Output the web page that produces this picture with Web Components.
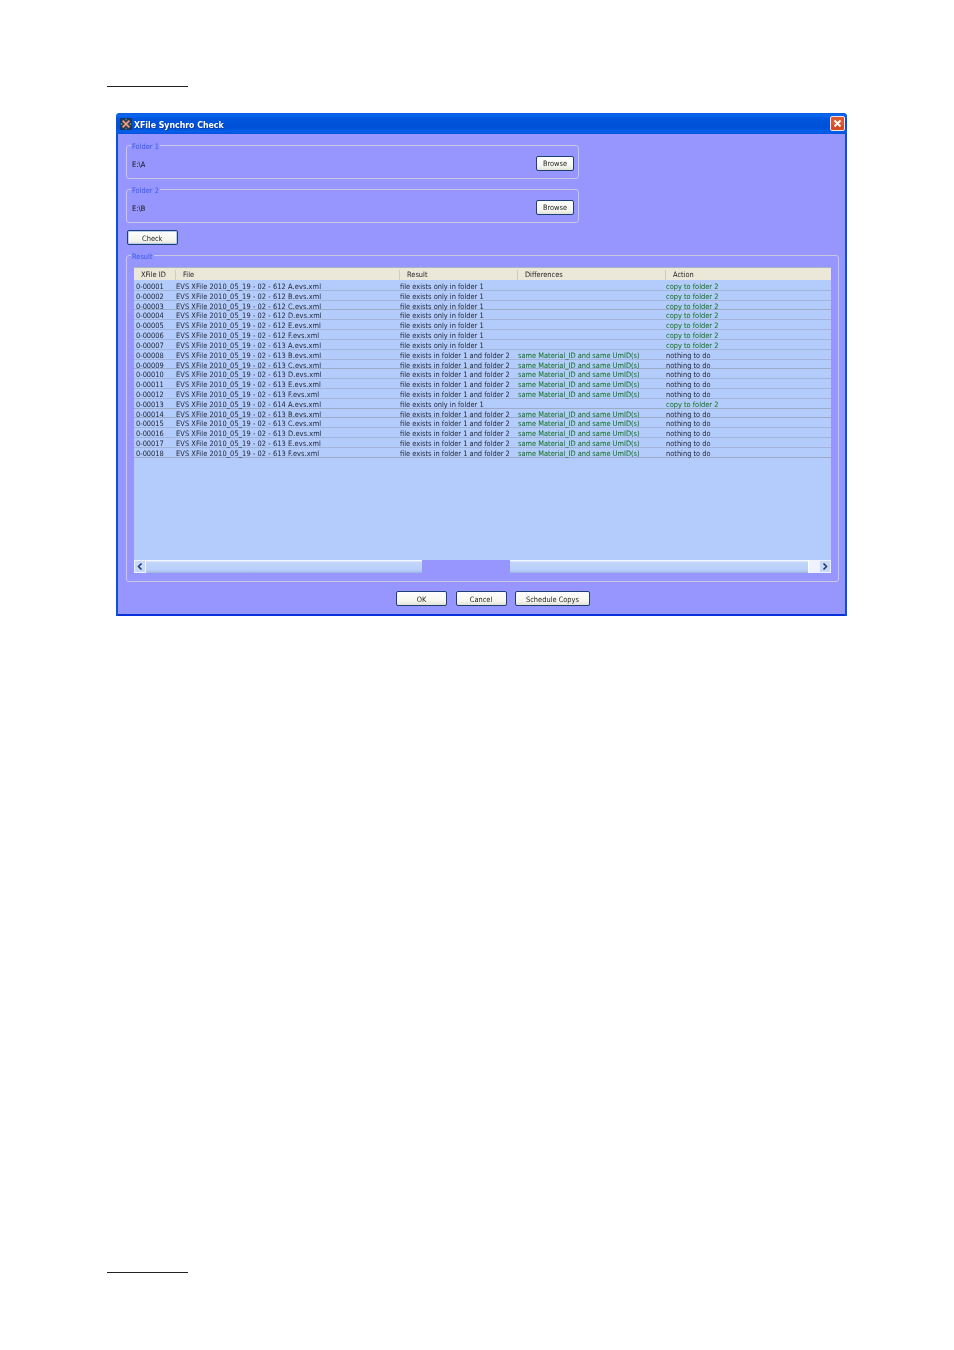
<!DOCTYPE html>
<html>
<head>
<meta charset="utf-8">
<title>XFile Synchro Check</title>
<style>
  html, body { margin: 0; padding: 0; background: #fff; }
</style>
</head>
<body>
<doc-page>
  <xp-window title="XFile Synchro Check">
    <xp-group legend="Folder 1" style="width:453px;height:34px">
      <span style="padding-top:2px">E:\A</span>
      <xp-button style="width:38px">Browse</xp-button>
    </xp-group>
    <xp-group legend="Folder 2" style="width:453px;height:34px;margin-top:10px">
      <span style="padding-top:2px">E:\B</span>
      <xp-button style="width:38px">Browse</xp-button>
    </xp-group>
    <xp-button focused style="width:50.5px;margin:7px 0 10px 1px">Check</xp-button>
    <xp-group legend="Result" mode="block" style="height:327px">
      <xfile-grid></xfile-grid>
      <xp-scrollbar></xp-scrollbar>
    </xp-group>
    <div style="display:flex;gap:8.5px;margin:9px 0 0 270px">
      <xp-button style="width:51px">OK</xp-button>
      <xp-button style="width:51px">Cancel</xp-button>
      <xp-button style="width:75px">Schedule Copys</xp-button>
    </div>
  </xp-window>
</doc-page>

<script>
const FONT = '"DejaVu Sans Condensed", "DejaVu Sans", sans-serif';

class DocPage extends HTMLElement {
  connectedCallback() {
    this.attachShadow({ mode: 'open' });
    this.shadowRoot.innerHTML = `
      <style>
        :host {
          display: flex;
          flex-direction: column;
          width: 954px;
          height: 1350px;
          box-sizing: border-box;
          padding: 86px 0 0 107px;
          background: #fff;
          font-family: ${FONT};
        }
        .rule { width: 81px; height: 1px; background: #222; flex: none; }
        .win { margin: 26px 0 0 9px; flex: none; }
        .bottom { margin-top: 656px; }
      </style>
      <div class="rule"></div>
      <div class="win"><slot></slot></div>
      <div class="rule bottom"></div>
    `;
  }
}
customElements.define('doc-page', DocPage);

class XpWindow extends HTMLElement {
  connectedCallback() {
    this.attachShadow({ mode: 'open' });
    this.shadowRoot.innerHTML = `
      <style>
        :host {
          display: flex;
          flex-direction: column;
          width: 731px;
          height: 503px;
          box-sizing: border-box;
          border-radius: 4px 4px 0 0;
          overflow: hidden;
          background: #0a4fe0;
          font-family: ${FONT};
          filter: blur(0.3px);
        }
        .bar {
          display: flex;
          align-items: center;
          height: 21px;
          flex: none;
          padding: 0 2px 0 4px;
          gap: 2px;
          background: linear-gradient(#0a5ee6 0, #0a66ee 12%, #0054dc 30%, #0050d8 70%, #0560ea 90%, #0350dc 100%);
          color: #fff;
          font: bold 8.7px ${FONT};
        }
        .bar svg { flex: none; display: block; }
        .bar .name { flex: 1; padding-top: 2px; text-shadow: 1px 1px 0 #0a3aa8; }
        .body {
          flex: 1;
          display: flex;
          flex-direction: column;
          margin: 0 2px 2px;
          padding: 11px 6px 0 8px;
          background: #9696fe;
          box-shadow: 0 2px 0 #0831d9;
          min-height: 0;
        }
      </style>
      <div class="bar">
        <svg width="12" height="12" viewBox="0 0 12 12">
          <rect width="12" height="12" rx="1" fill="#1a3560"/>
          <path d="M2.5 2.5l7 7M9.5 2.5l-7 7" stroke="#c8785c" stroke-width="2.4"/>
          <path d="M3 3l6 6M9 3l-6 6" stroke="#f0d4bc" stroke-width=".6"/>
          <circle cx="1.5" cy="6" r="1" fill="#5f9a5a"/>
          <circle cx="10.5" cy="6" r="1" fill="#5f9a5a"/>
          <circle cx="6" cy="1.5" r="1" fill="#3f7a8a"/>
          <circle cx="6" cy="10.5" r="1" fill="#3f7a8a"/>
        </svg>
        <span class="name">${this.getAttribute('title') || ''}</span>
        <svg width="15" height="15" viewBox="0 0 15 15">
          <rect x=".5" y=".5" width="14" height="14" rx="1.5" fill="#dc5a34" stroke="#f4e4dc"/>
          <rect x="1.5" y="9" width="12" height="4.5" fill="#c8401c" opacity=".6"/>
          <path d="M4.5 4.5l6 6M10.5 4.5l-6 6" stroke="#fff" stroke-width="1.8"/>
        </svg>
      </div>
      <div class="body"><slot></slot></div>
    `;
  }
}
customElements.define('xp-window', XpWindow);

class XpGroup extends HTMLElement {
  connectedCallback() {
    this.attachShadow({ mode: 'open' });
    const block = this.getAttribute('mode') === 'block';
    this.shadowRoot.innerHTML = `
      <style>
        :host {
          display: block;
          position: relative;
          box-sizing: border-box;
          flex: none;
          border: 1px solid #c8c8e0;
          border-radius: 3px;
          font: 7.4px ${FONT};
          color: #111;
        }
        .legend {
          position: absolute;
          left: 4px;
          top: -4px;
          padding: 0 1px;
          background: #9696fe;
          color: #3658e8;
          line-height: 9px;
        }
        .in {
          box-sizing: border-box;
          height: 100%;
          ${block
            ? 'padding: 11px 7px 0 7px;'
            : 'display: flex; align-items: center; justify-content: space-between; padding: 2px 4px 0 5px;'}
        }
      </style>
      <span class="legend">${this.getAttribute('legend') || ''}</span>
      <div class="in"><slot></slot></div>
    `;
  }
}
customElements.define('xp-group', XpGroup);

class XpButton extends HTMLElement {
  connectedCallback() {
    this.attachShadow({ mode: 'open' });
    const focus = this.hasAttribute('focused');
    this.shadowRoot.innerHTML = `
      <style>
        :host {
          display: flex;
          align-items: center;
          justify-content: center;
          flex: none;
          box-sizing: border-box;
          height: 15px;
          padding-top: 1px;
          border: 1px solid #1c3f74;
          border-radius: 2px;
          background: linear-gradient(#ffffff, #f6f6f0 70%, #e4e2d6);
          ${focus ? 'box-shadow: inset 0 0 0 1px #b8ccf0;' : ''}
          color: #222;
          font: 7.4px ${FONT};
        }
      </style>
      <slot></slot>
    `;
  }
}
customElements.define('xp-button', XpButton);

class XfileGrid extends HTMLElement {
  connectedCallback() {
    this.attachShadow({ mode: 'open' });
    const ONLY = 'file exists only in folder 1';
    const BOTH = 'file exists in folder 1 and folder 2';
    const SAME = 'same Material_ID and same UmID(s)';
    const COPY = 'copy to folder 2';
    const NONE = 'nothing to do';
    const files = ['612 A', '612 B', '612 C', '612 D', '612 E', '612 F', '613 A',
      '613 B', '613 C', '613 D', '613 E', '613 F', '614 A',
      '613 B', '613 C', '613 D', '613 E', '613 F'];
    const ids = ['00001', '00002', '00003', '00004', '00005', '00006', '00007', '00008', '00009',
      '00010', '00011', '00012', '00013', '00014', '00015', '00016', '00017', '00018'];
    // these rows have a heavier line under them in the shot
    const strong = [2, 8, 12, 13, 17];
    const rows = files.map((f, i) => {
      const only = i < 7 || i === 12;
      return `<div class="row${strong.includes(i) ? ' strong' : ''}">
        <span>0-${ids[i]}</span>
        <span class="file">EVS XFile 2010_05_19 - 02 - ${f}.evs.xml</span>
        <span>${only ? ONLY : BOTH}</span>
        <span class="g">${only ? '' : SAME}</span>
        <span class="${only ? 'g' : ''}">${only ? COPY : NONE}</span>
      </div>`;
    }).join('');
    this.shadowRoot.innerHTML = `
      <style>
        :host {
          display: block;
          height: 293px;
          background: #b4ccfc;
          font: 7.4px ${FONT};
          color: #1c2230;
          --cols: 41px 224px 118px 148px 1fr;
        }
        .head {
          display: grid;
          grid-template-columns: var(--cols);
          height: 13px;
          padding-top: 1px;
          align-items: center;
          background: #ebe8d9;
          border-top: 1px solid #a8b4c0;
          box-sizing: border-box;
          color: #222;
        }
        .head span { padding-left: 7px; border-left: 1px solid #cfccba; line-height: 10px; white-space: nowrap; }
        .head span:first-child { border-left: 0; }
        .rows { padding-top: 1px; }
        .row {
          display: grid;
          grid-template-columns: var(--cols);
          height: 9.82px;
          box-sizing: border-box;
          border-bottom: 1px solid #a2b4d8;
          line-height: 12px;
          white-space: nowrap;
        }
        .row.strong { border-bottom-color: #9cabc8; }
        .row span { padding-left: 1px; }
        .row span:first-child { padding-left: 2px; }
        .row .file { letter-spacing: .07px; }
        .g { color: #0a7014; }
      </style>
      <div class="head">
        <span>XFile ID</span><span>File</span><span>Result</span><span>Differences</span><span>Action</span>
      </div>
      <div class="rows">${rows}</div>
    `;
  }
}
customElements.define('xfile-grid', XfileGrid);

class XpScrollbar extends HTMLElement {
  connectedCallback() {
    this.attachShadow({ mode: 'open' });
    this.shadowRoot.innerHTML = `
      <style>
        :host { display: flex; height: 13px; }
        .part {
          display: flex;
          align-items: stretch;
          box-sizing: border-box;
          background: linear-gradient(#f4f8ff 0, #f4f8ff 8%, #c4d6f8 14%, #b8cefa 80%, #9ab4e0 100%);
        }
        .left { width: 288px; }
        .gap { width: 88px; }
        .right { flex: 1; justify-content: flex-end; }
        .arrow {
          display: flex;
          align-items: center;
          justify-content: center;
          width: 12px;
          background: #c8d8f8;
          border: 1px solid #eef3ff;
          box-sizing: border-box;
        }
        .knob { width: 10px; background: #eef3ff; border-left: 1px solid #fff; }
      </style>
      <div class="part left">
        <div class="arrow"><svg width="6" height="7" viewBox="0 0 6 7"><path d="M4.5 .5L1.5 3.5l3 3" fill="none" stroke="#24406c" stroke-width="1.6"/></svg></div>
      </div>
      <div class="gap"></div>
      <div class="part right">
        <div class="knob"></div>
        <div class="arrow"><svg width="6" height="7" viewBox="0 0 6 7"><path d="M1.5 .5l3 3-3 3" fill="none" stroke="#24406c" stroke-width="1.6"/></svg></div>
      </div>
    `;
  }
}
customElements.define('xp-scrollbar', XpScrollbar);
</script>
</body>
</html>
